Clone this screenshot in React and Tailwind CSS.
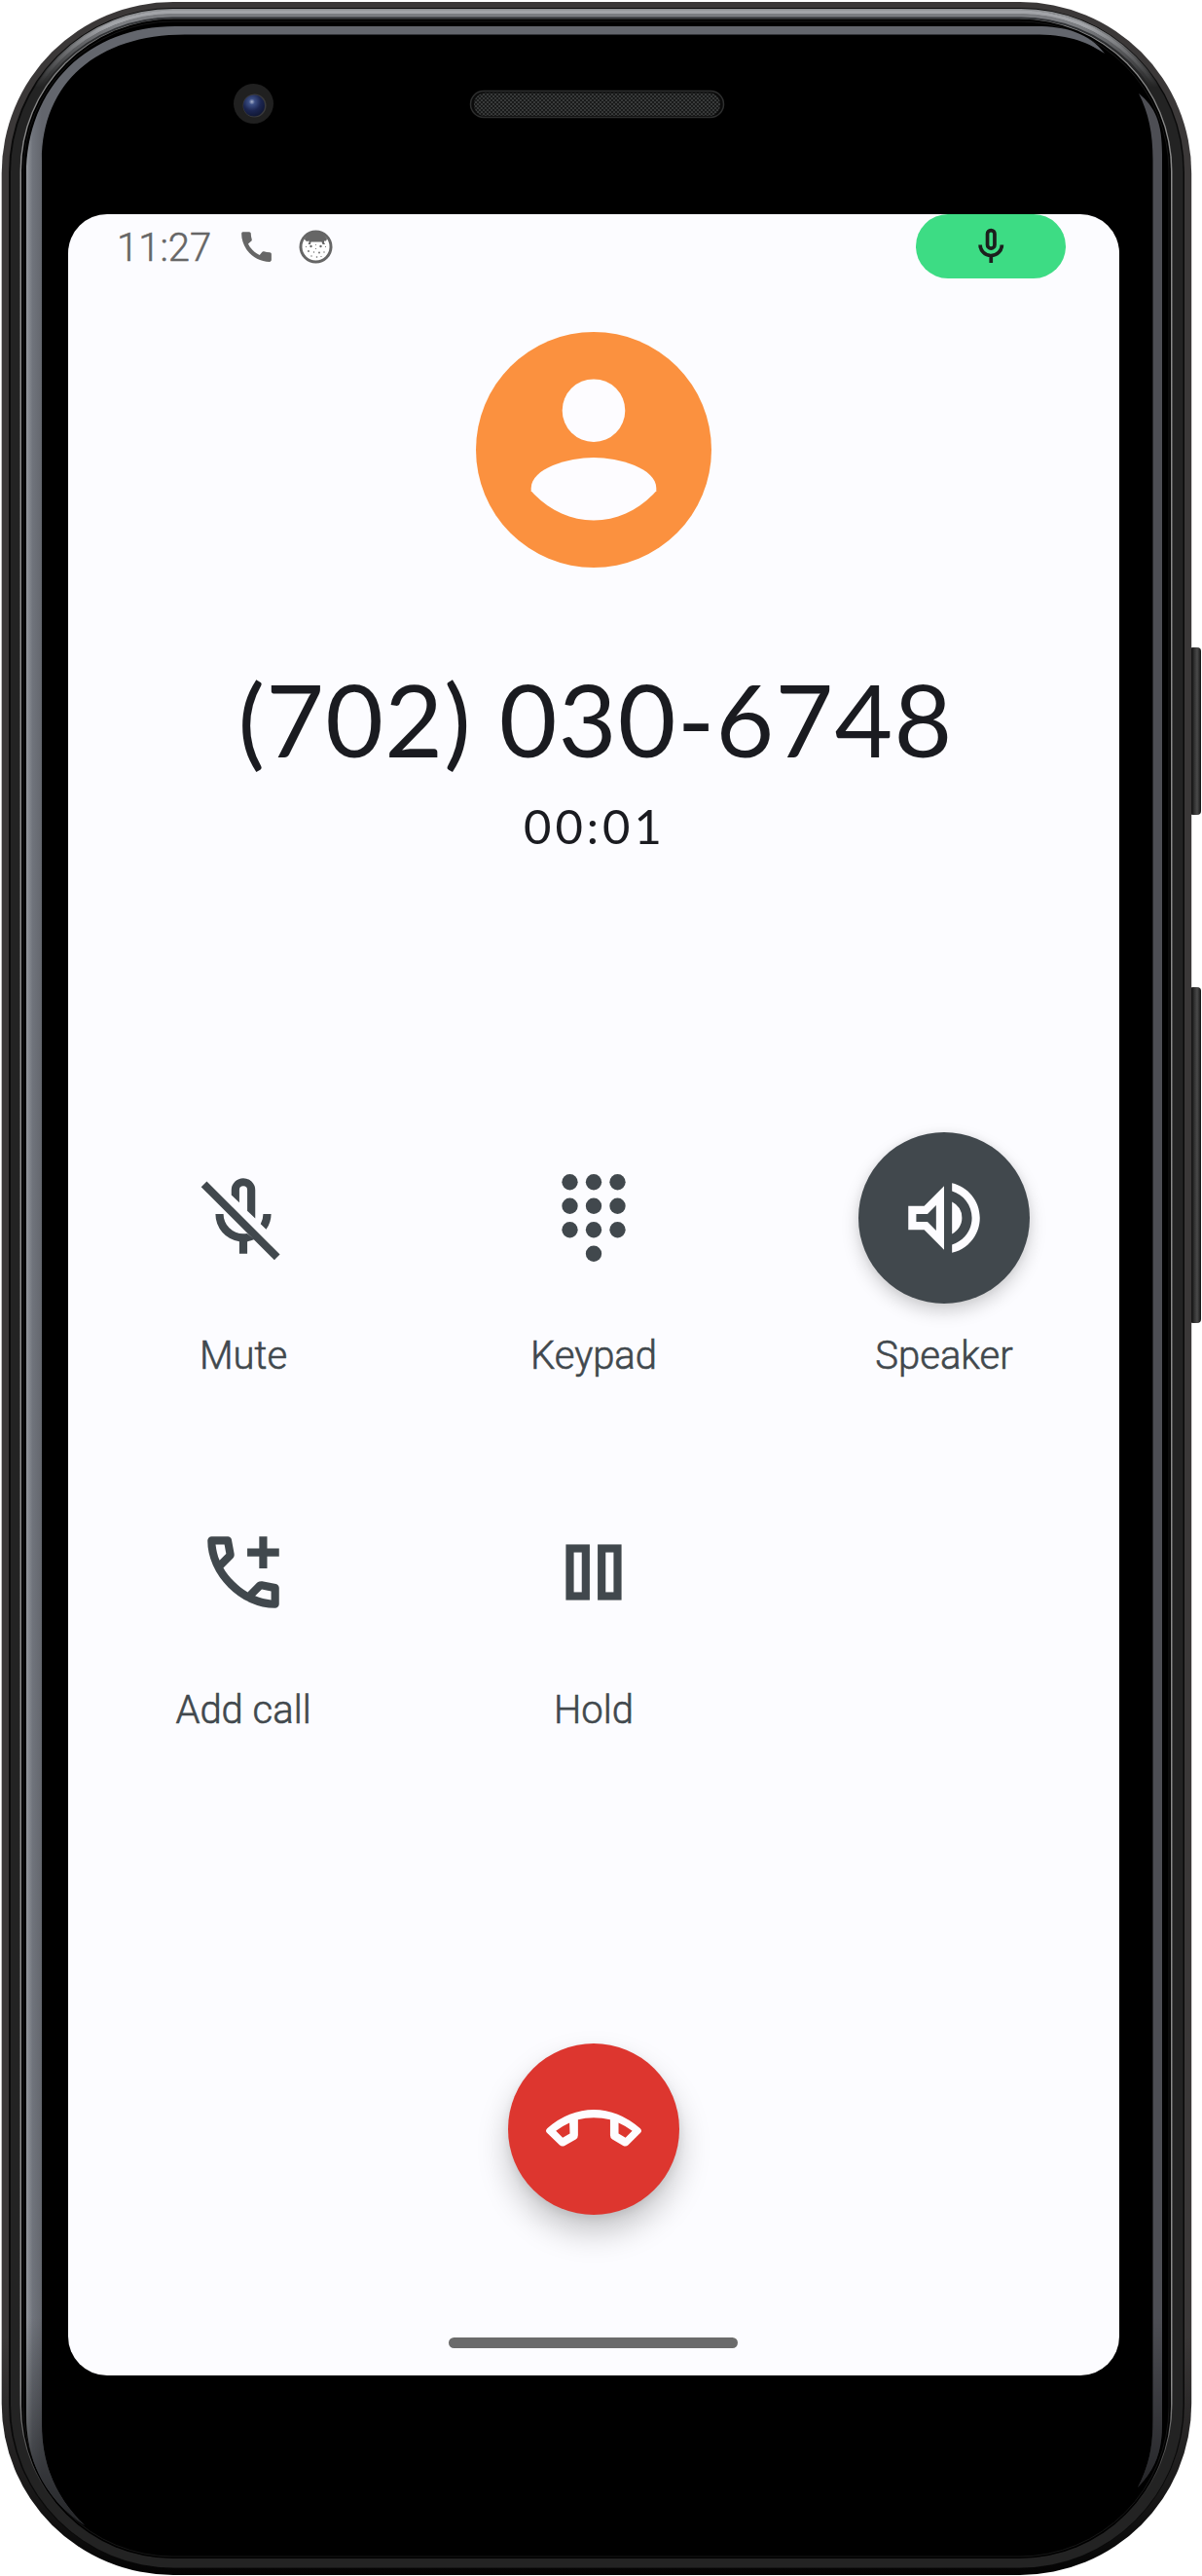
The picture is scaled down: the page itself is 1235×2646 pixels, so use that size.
import React from "react";
import { MdCall, MdOutlineVolumeUp } from "react-icons/md";

/* Phone body: metal rim, glass reflections, earpiece, camera and side keys */
function DeviceFrame() {
  return (
    <svg className="absolute inset-0" width="1235" height="2646" viewBox="0 0 1235 2646" aria-hidden="true">
      <defs>
        <linearGradient id="rimFade" x1="0" y1="0" x2="0" y2="90" gradientUnits="userSpaceOnUse">
          <stop offset="0" stopColor="#fff" />
          <stop offset="0.3" stopColor="#fff" />
          <stop offset="1" stopColor="#000" />
        </linearGradient>
        <mask id="topOnly" maskUnits="userSpaceOnUse" x="0" y="0" width="1235" height="2646">
          <rect width="1235" height="2646" fill="url(#rimFade)" />
        </mask>
        <linearGradient id="shell" x1="0" y1="2400" x2="0" y2="2646" gradientUnits="userSpaceOnUse">
          <stop offset="0" stopColor="#3b3838" />
          <stop offset="0.6" stopColor="#1c1b1b" />
          <stop offset="1" stopColor="#030303" />
        </linearGradient>
        <linearGradient id="edgeLine" x1="0" y1="2450" x2="0" y2="2600" gradientUnits="userSpaceOnUse">
          <stop offset="0" stopColor="#8a8a8a" />
          <stop offset="1" stopColor="#1a1a1a" />
        </linearGradient>
        <linearGradient id="leftGlint" x1="27" y1="0" x2="43" y2="0" gradientUnits="userSpaceOnUse">
          <stop offset="0" stopColor="#93979c" />
          <stop offset="0.4" stopColor="#70747c" />
          <stop offset="1" stopColor="#63666d" />
        </linearGradient>
        <linearGradient id="glintEnd" x1="0" y1="2380" x2="0" y2="2600" gradientUnits="userSpaceOnUse">
          <stop offset="0" stopColor="#000" stopOpacity="0" />
          <stop offset="1" stopColor="#000" stopOpacity="0.65" />
        </linearGradient>
        <linearGradient id="key" x1="1224" y1="0" x2="1234" y2="0" gradientUnits="userSpaceOnUse">
          <stop offset="0" stopColor="#0a0a0a" />
          <stop offset="0.3" stopColor="#303030" />
          <stop offset="0.6" stopColor="#4a4a4a" />
          <stop offset="0.8" stopColor="#303030" />
          <stop offset="1" stopColor="#111" />
        </linearGradient>
        <radialGradient id="lens" cx="0.4" cy="0.32" r="0.7">
          <stop offset="0" stopColor="#a9b3cc" />
          <stop offset="0.2" stopColor="#3c4f85" />
          <stop offset="0.6" stopColor="#1b2550" />
          <stop offset="1" stopColor="#101735" />
        </radialGradient>
        <pattern id="mesh" width="4" height="4" patternUnits="userSpaceOnUse">
          <rect width="4" height="4" fill="#191a1a" />
          <circle cx="1" cy="1" r="0.85" fill="#545757" />
          <circle cx="3" cy="3" r="0.85" fill="#545757" />
        </pattern>
      </defs>
      <rect x="1222" y="665" width="12" height="172" rx="4" fill="url(#key)" />
      <rect x="1222" y="1014" width="12" height="345" rx="4" fill="url(#key)" />
      <rect x="1.7" y="2" width="1222.5" height="2643" rx="176" fill="url(#shell)" />
      <rect x="9" y="8" width="1208" height="2630" rx="169" fill="#0a0a0a" />
      <rect x="11" y="9.5" width="1204.5" height="2628" rx="167" fill="#232323" />
      <rect x="20.5" y="18" width="1184" height="2610" rx="158" fill="url(#edgeLine)" />
      <g mask="url(#topOnly)" fill="none">
        <rect x="11.5" y="10" width="1203.5" height="2626" rx="166" stroke="#8a8c8f" strokeWidth="2" />
        <rect x="14" y="12.5" width="1198" height="2621" rx="163.500" stroke="#a2a4a8" strokeWidth="4" />
        <rect x="17" y="16" width="1192" height="2614" rx="160.500" stroke="#7b7d81" strokeWidth="4" />
        <rect x="19" y="18.500" width="1188" height="2609" rx="158" stroke="#333538" strokeWidth="2" />
      </g>
      <rect x="22" y="19.500" width="1181" height="2608.500" rx="156" fill="#000" />
      <rect x="24" y="22" width="1177" height="2604" rx="154" fill="none" stroke="#161616" strokeWidth="1" />
      <path
        d="M87 2594C48 2568 27 2530 27 2480V180C27 88 92 27 180 27H1065C1095 27 1119 34 1135 55C1114 41 1095 35.500 1062 35.500H190C100 35.500 43 85 43 165V2490C43 2535 60 2568 87 2594Z"
        fill="url(#leftGlint)"
      />
      <path d="M87 2594C48 2568 27 2530 27 2480V2380H43V2490C43 2535 60 2568 87 2594Z" fill="url(#glintEnd)" />
      <path
        d="M1170 96C1187 110 1194 126 1194 158V2490C1194 2520 1186 2537 1169 2555C1180 2533 1184.500 2516 1184.500 2485V165C1184.500 136 1180 116 1170 96Z"
        fill="#4d4e54"
      />
      <path d="M1194 2380V2490C1194 2520 1186 2537 1169 2555C1180 2533 1184.500 2516 1184.500 2485V2380Z" fill="url(#glintEnd)" />
      <circle cx="260.500" cy="106.500" r="20.500" fill="#202020" />
      <circle cx="261.500" cy="108.500" r="12" fill="#3a3a3c" />
      <circle cx="261" cy="108.500" r="11" fill="url(#lens)" />
      <rect x="483.500" y="93.500" width="260" height="27" rx="13.500" fill="#0b0b0b" stroke="#2e2f2f" strokeWidth="1.500" />
      <rect x="487" y="95.500" width="253" height="23.500" rx="11.500" fill="url(#mesh)" />
    </svg>
  );
}

function MicIcon() {
  return (
    <svg className="size-[44.5px]" viewBox="0 0 24 24" fill="none" stroke="#1c1f1d" strokeWidth="2">
      <rect x="10" y="3" width="4" height="10" rx="2" />
      <path d="M6 11a6 6 0 0 0 12 0M12 17v4" />
    </svg>
  );
}

function FaceIcon() {
  return (
    <svg className="size-[35px]" viewBox="0 0 35 35">
      <circle cx="17.500" cy="17.500" r="15.500" fill="#fff" stroke="#666" strokeWidth="3" />
      <path
        d="M6 9.500C9 4 13 1.500 17.500 1.500S26 4 29 9.500L28 11.500L26 11.500V13L27 15H24.500L23.500 12.500H12.500L12 15H9.500L10.500 13V11.500L8 12L6 10Z"
        fill="#666"
      />
      <g fill="#666">
        <circle cx="12.500" cy="17" r="1.200" />
        <circle cx="22.500" cy="17" r="1.200" />
        <circle cx="7.500" cy="17.500" r=".6" />
        <circle cx="27.500" cy="17.500" r=".6" />
        <circle cx="10" cy="22" r=".9" />
        <circle cx="15.500" cy="23" r=".7" />
        <circle cx="21" cy="23.500" r=".9" />
        <circle cx="26" cy="23" r=".7" />
        <circle cx="13" cy="27" r=".7" />
        <circle cx="17.500" cy="19.500" r=".6" />
        <circle cx="18.500" cy="28" r=".8" />
        <circle cx="23" cy="27.500" r=".6" />
        <circle cx="17.500" cy="15.500" r=".5" />
      </g>
    </svg>
  );
}

function Avatar() {
  return (
    <svg className="size-[242px]" viewBox="0 0 242 242">
      <circle cx="121" cy="121" r="121" fill="#fb913f" />
      <circle cx="121" cy="80.700" r="32.300" fill="#fdfcff" />
      <path
        d="M56.700 163.300V160.500C56.700 140 95 129 121 129S185.300 140 185.300 160.500V163.300C168 182.500 146 193.500 121 193.500S74 182.500 56.700 163.300Z"
        fill="#fdfcff"
      />
    </svg>
  );
}

function MuteIcon() {
  return (
    <svg className="size-[98px]" viewBox="0 0 24 24" fill="currentColor">
      <path d="M15 12.150L13 10.250V5a1 1 0 0 0-2 0V8.150L9 6.250V5a3 3 0 0 1 6 0Z" />
      <path d="M17 11H19Q19 13.100 17.750 14.900L16.350 13.500Q17 12.300 17 11Z" />
      <path d="M5 11H7A5 5 0 0 0 12 16Q12.500 16 12.950 15.900L14.800 17.400Q14 17.800 13 17.930V21H11V17.930A7 7 0 0 1 5 11Z" />
      <path d="M2.800 2.800L1.400 4.200L19.800 22.600L21.200 21.200Z" />
    </svg>
  );
}

function KeypadIcon() {
  const dots = [
    [6, 3], [12, 3], [18, 3],
    [6, 9], [12, 9], [18, 9],
    [6, 15], [12, 15], [18, 15],
    [12, 21],
  ];
  return (
    <svg className="size-[98px]" viewBox="0 0 24 24" fill="currentColor">
      {dots.map(([x, y]) => (
        <circle key={`${x}-${y}`} cx={x} cy={y} r="2" />
      ))}
    </svg>
  );
}

function AddCallIcon() {
  return (
    <svg className="size-[98px]" viewBox="0 0 24 24" fill="currentColor">
      <path d="M16 11V8H13V6H16V3H18V6H21V8H18V11Z" />
      <path
        fillRule="evenodd"
        d="M19.950 21q-3.125 0-6.175-1.363t-5.550-3.862q-2.500-2.500-3.862-5.550T3 4.050q0-.45.3-.75t.75-.3H8.100q.35 0 .625.238t.325.562l.65 3.500q.05.4-.025.675T9.400 8.450L6.975 10.900q.5.925 1.187 1.787t1.513 1.663q.775.775 1.625 1.438T13.100 17l2.350-2.350q.225-.225.588-.337t.712-.063l3.450.7q.35.1.575.363T21 15.900v4.050q0 .45-.3.75t-.75.3ZM6.025 9l1.650-1.650L7.250 5H5.025q.125 1.025.35 2.025T6.025 9Zm8.950 8.950q.975.425 1.988.675T19 18.950v-2.200l-2.350-.475Z"
      />
    </svg>
  );
}

function HoldIcon() {
  return (
    <svg className="size-[98px]" viewBox="0 0 24 24" fill="none" stroke="currentColor" strokeWidth="2">
      <rect x="6" y="6" width="4" height="12" />
      <rect x="14" y="6" width="4" height="12" />
    </svg>
  );
}

function EndCallIcon() {
  return (
    <svg className="size-[98px] overflow-visible" viewBox="0 0 24 24" fill="#fdfcff">
      <path
        fillRule="evenodd"
        d="M12 7.100Q15.100 7.100 18 8.250T23.700 11.800Q24.300 12.400 23.700 13L20.700 16Q20.100 16.500 19.400 16.150L16.700 14.550Q16.150 14.200 16.150 13.500V9.600Q14.200 9.100 12 9.100T8.050 9.600V13.500Q8.050 14.200 7.500 14.550L4.700 16.150Q4 16.500 3.400 16L.3 13Q-.3 12.400.3 11.800Q3 9.400 6 8.250T12 7.100ZM5.900 10.400Q4.100 11.200 2.500 12.450L4.200 14.150L6 13.100ZM18.250 10.400V13.100L20 14.150L21.700 12.450Q20.100 11.200 18.250 10.400Z"
      />
    </svg>
  );
}

function Action({ icon, label, active }) {
  return (
    <button className="flex flex-col items-center">
      <span
        className={
          active
            ? "flex size-44 items-center justify-center rounded-full bg-[#41484d] text-[#fdfcff] shadow-[0_8px_18px_rgba(0,0,0,0.18),0_0_8px_rgba(0,0,0,0.06)]"
            : "flex size-44 items-center justify-center"
        }
      >
        {icon}
      </span>
      <span className="mt-[30px] text-[40px] leading-[48px] font-light [-webkit-text-stroke:0.6px_#41484d]">{label}</span>
    </button>
  );
}

export default function App() {
  return (
    <div className="relative h-[2646px] w-[1235px] overflow-hidden bg-white pl-[70px] pt-[220px]">
      <DeviceFrame />
      <main className="relative flex h-[2220px] w-[1080px] flex-col overflow-hidden rounded-[40px] bg-[#fcfcff] font-['Roboto',sans-serif] text-[#41484d]">
        <header className="flex h-[66px] items-center pl-[50px] pr-[55px] text-[#666]">
          <span className="w-[123px] pt-[3px] text-[40px] leading-[66px] font-light [-webkit-text-stroke:0.5px_#666]">11:27</span>
          <MdCall className="size-[41px]" />
          <span className="ml-[23px]">
            <FaceIcon />
          </span>
          <span className="ml-auto flex h-[66px] w-[154px] items-center justify-center rounded-full bg-[#3ddc84]">
            <MicIcon />
          </span>
        </header>

        <section className="mt-[55px] flex flex-col items-center font-['Lato',sans-serif] text-[#1a1b20]">
          <Avatar />
          <h1 className="mt-[89px] pl-[4px] text-[103px] leading-[132px] tracking-[1.3px]">(702) 030-6748</h1>
          <p className="mt-[12px] pl-[2px] text-[49px] leading-[64px] tracking-[4px]">00:01</p>
        </section>

        <section className="mt-[283px] grid grid-cols-3 gap-y-[110px]">
          <Action icon={<MuteIcon />} label="Mute" />
          <Action icon={<KeypadIcon />} label="Keypad" />
          <Action icon={<MdOutlineVolumeUp className="size-[98px]" />} label="Speaker" active />
          <Action icon={<AddCallIcon />} label="Add call" />
          <Action icon={<HoldIcon />} label="Hold" />
        </section>

        <footer className="mt-auto flex flex-col items-center pb-[28px]">
          <button className="flex size-44 items-center justify-center rounded-full bg-[#dd362f] shadow-[0_18px_32px_rgba(0,0,0,0.22),0_4px_10px_rgba(0,0,0,0.08)]">
            <EndCallIcon />
          </button>
          <span className="mt-[126px] mr-[1px] h-[11px] w-[297px] rounded-full bg-[#6b6b6b]" />
        </footer>
      </main>
    </div>
  );
}
